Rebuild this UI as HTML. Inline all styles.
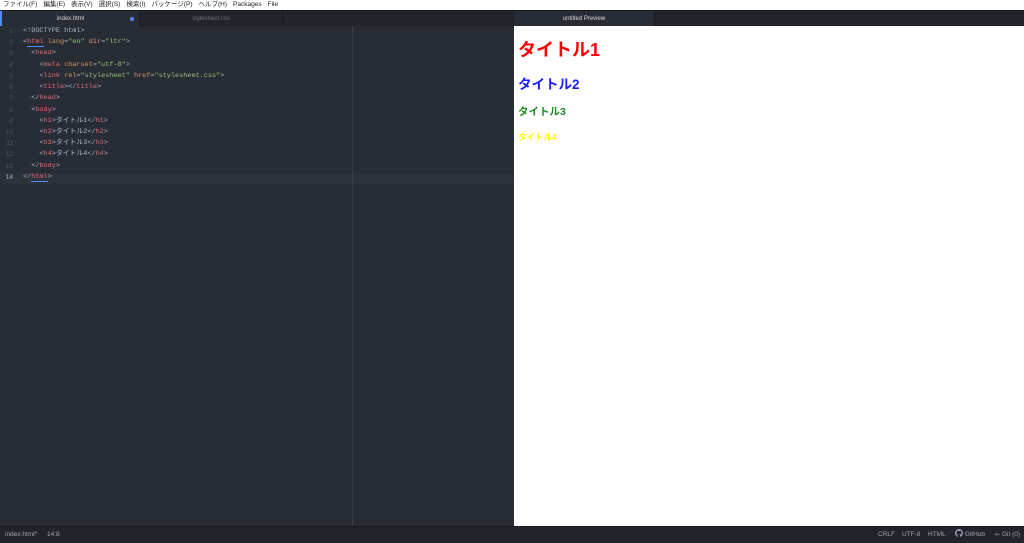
<!DOCTYPE html>
<html><head><meta charset="utf-8"><style>
*{margin:0;padding:0;box-sizing:border-box}
body{width:1024px;height:543px;overflow:hidden;background:#282c34;font-family:"Liberation Sans","Noto Sans CJK JP",sans-serif;position:relative}
.menu{position:absolute;top:0;left:0;width:1024px;height:10px;background:#fff;font-size:6.5px;line-height:10px;color:#222;padding-left:3px;white-space:nowrap}
.menu span{margin-right:6px}
.tabs{position:absolute;top:10px;left:0;width:1024px;height:16px;background:#21252b;border-top:1px solid #181a1f}
.tab{position:absolute;top:0;height:16px;font-size:6px;line-height:17px;text-align:center;color:#6b717d;border-right:1px solid #181a1f}
.editor{position:absolute;top:26px;left:0;width:514px;height:500px;background:#282c34}
.gut{position:absolute;left:0;top:0;width:13px;color:#4b5263;font-size:6.5px;text-align:right}
.code{position:absolute;left:23px;top:0;font-family:"Liberation Mono","Noto Sans CJK JP",monospace;font-size:6.85px;color:#abb2bf;white-space:pre}
.in{position:absolute;left:0;top:0;width:514px;padding-top:4px}
.l{height:11.23px;line-height:11.23px}
.t{color:#e06c75}.a{color:#d19a66}.s{color:#98c379}.p{color:#abb2bf}
.preview{position:absolute;top:26px;left:514px;width:510px;height:500px;background:#fff;font-family:"Liberation Sans","Noto Sans CJK JP",sans-serif;font-weight:bold}
.status{position:absolute;top:526px;left:0;width:1024px;height:17px;background:#21252b;border-top:1px solid #181a1f;color:#9da5b4;font-size:6.5px;line-height:16px}
</style></head><body>
<div class="menu"><span>ファイル(F)</span><span>編集(E)</span><span>表示(V)</span><span>選択(S)</span><span>検索(I)</span><span>パッケージ(P)</span><span>ヘルプ(H)</span><span>Packages</span><span>File</span></div>
<div class="tabs">
<div class="tab" style="left:0;width:140px;background:#282c34;color:#d7dae0;border-left:2px solid #528bff">index.html<span style="position:absolute;right:5px;top:6px;width:4px;height:4px;border-radius:50%;background:#528bff"></span></div>
<div class="tab" style="left:140px;width:143px">stylesheet.css</div>
<div class="tab" style="left:514px;width:141px;background:#282c34;color:#d7dae0">untitled Preview</div>
</div>
<div class="editor">
<div style="position:absolute;left:0;top:147px;width:514px;height:11.2px;background:#2c313a"></div>
<div style="position:absolute;left:352px;top:0;width:1px;height:500px;background:#3a3f4b"></div>
<div class="in">
<div class="gut"><div class="l">1</div><div class="l">2</div><div class="l">3</div><div class="l">4</div><div class="l">5</div><div class="l">6</div><div class="l">7</div><div class="l">8</div><div class="l">9</div><div class="l">10</div><div class="l">11</div><div class="l">12</div><div class="l">13</div><div class="l" style="color:#abb2bf">14</div></div>
<div class="code"><div class="l">&lt;!DOCTYPE html&gt;</div><div class="l">&lt;<span class="t" style="border-bottom:1px solid #528bff">html</span> <span class="a">lang</span>=<span class="s">"en"</span> <span class="a">dir</span>=<span class="s">"ltr"</span>&gt;</div><div class="l">  &lt;<span class="t">head</span>&gt;</div><div class="l">    &lt;<span class="t">meta</span> <span class="a">charset</span>=<span class="s">"utf-8"</span>&gt;</div><div class="l">    &lt;<span class="t">link</span> <span class="a">rel</span>=<span class="s">"stylesheet"</span> <span class="a">href</span>=<span class="s">"stylesheet.css"</span>&gt;</div><div class="l">    &lt;<span class="t">title</span>&gt;&lt;/<span class="t">title</span>&gt;</div><div class="l">  &lt;/<span class="t">head</span>&gt;</div><div class="l">  &lt;<span class="t">body</span>&gt;</div><div class="l">    &lt;<span class="t">h1</span>&gt;タイトル1&lt;/<span class="t">h1</span>&gt;</div><div class="l">    &lt;<span class="t">h2</span>&gt;タイトル2&lt;/<span class="t">h2</span>&gt;</div><div class="l">    &lt;<span class="t">h3</span>&gt;タイトル3&lt;/<span class="t">h3</span>&gt;</div><div class="l">    &lt;<span class="t">h4</span>&gt;タイトル4&lt;/<span class="t">h4</span>&gt;</div><div class="l">  &lt;/<span class="t">body</span>&gt;</div><div class="l">&lt;/<span class="t" style="border-bottom:1px solid #528bff">html</span>&gt;</div></div>
</div>
</div>
<div class="preview">
<div style="position:absolute;left:4px;top:10px;font-size:18px;color:#f00">タイトル1</div>
<div style="position:absolute;left:4px;top:47px;font-size:13.5px;color:#1a1aff">タイトル2</div>
<div style="position:absolute;left:4px;top:78px;font-size:10.5px;color:#228b22">タイトル3</div>
<div style="position:absolute;left:4px;top:105px;font-size:8.5px;color:#ffff00">タイトル4</div>
</div>
<div class="status"><span style="position:absolute;left:5px">index.html*</span><span style="position:absolute;left:47px">14:8</span>
<span style="position:absolute;left:878px">CRLF</span><span style="position:absolute;left:902px">UTF-8</span><span style="position:absolute;left:928px">HTML</span>
<span style="position:absolute;left:955px"><svg width="8" height="8" viewBox="0 0 16 16" style="vertical-align:-1px"><path fill="#9da5b4" d="M8 0a8 8 0 0 0-2.5 15.6c.4 0 .5-.2.5-.4v-1.5c-2.2.5-2.7-1-2.7-1-.4-.9-.9-1.2-.9-1.2-.7-.5.1-.5.1-.5.8.1 1.2.8 1.2.8.7 1.3 1.9.9 2.3.7.1-.5.3-.9.5-1.1-1.8-.2-3.6-.9-3.6-4 0-.9.3-1.6.8-2.1-.1-.2-.4-1 .1-2.1 0 0 .7-.2 2.2.8a7.4 7.4 0 0 1 4 0c1.5-1 2.2-.8 2.2-.8.4 1.1.2 1.9.1 2.1.5.6.8 1.3.8 2.1 0 3.1-1.9 3.7-3.6 3.9.3.3.5.8.5 1.5v2.2c0 .2.1.5.6.4A8 8 0 0 0 8 0z"/></svg> GitHub</span>
<span style="position:absolute;left:995px">⟜ Git (0)</span></div>
</body></html>
